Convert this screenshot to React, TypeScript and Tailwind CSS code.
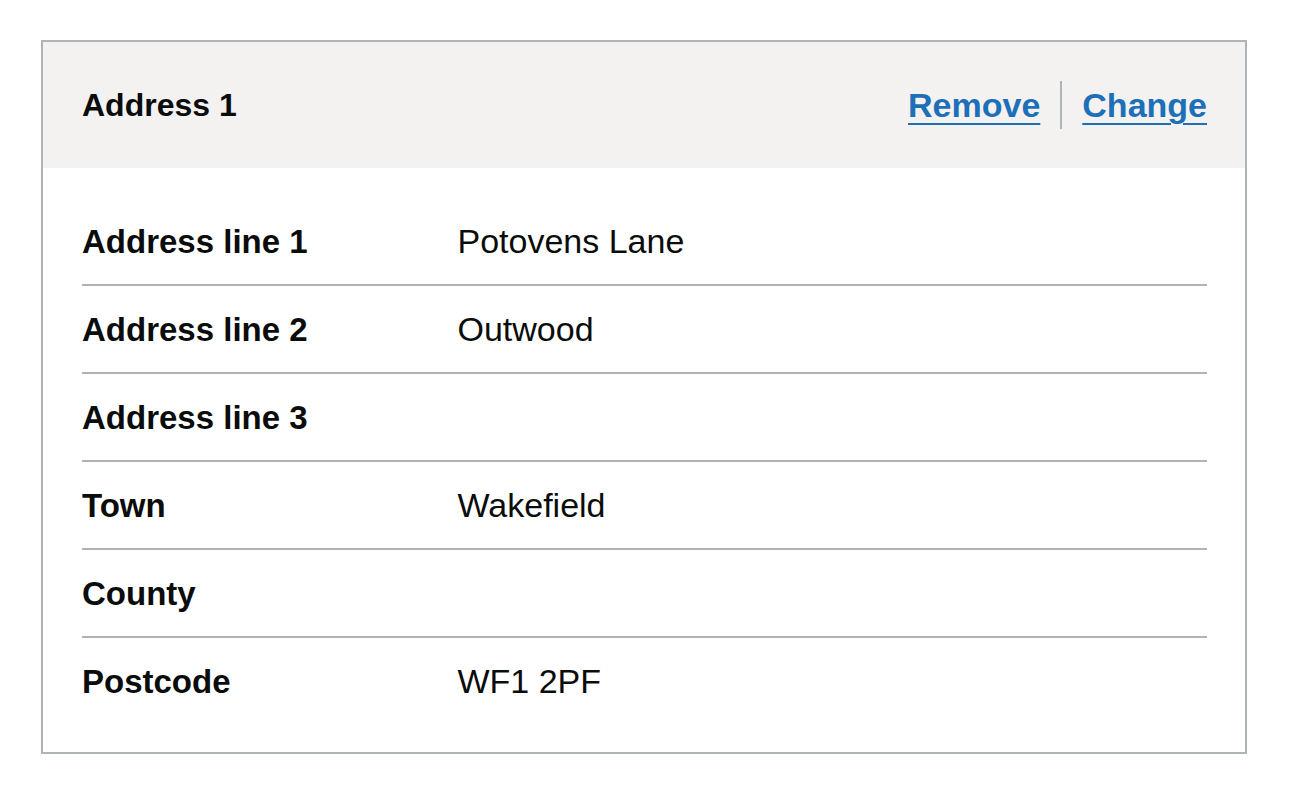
import React from "react";

const rows: { key: string; value: string }[] = [
  { key: "Address line 1", value: "Potovens Lane" },
  { key: "Address line 2", value: "Outwood" },
  { key: "Address line 3", value: "" },
  { key: "Town", value: "Wakefield" },
  { key: "County", value: "" },
  { key: "Postcode", value: "WF1 2PF" },
];

export default function App() {
  return (
    <div
      className="min-h-[800px] bg-white pt-[40px] pl-[41px] text-[#0b0c0c]"
      style={{ fontFamily: '"Liberation Sans", Arial, sans-serif' }}
    >
      <div className="w-[1206px] border-2 border-[#b1b4b6] bg-white">
        <div className="flex h-[126px] items-center justify-between bg-[#f3f2f1] pl-[39px] pr-[38px]">
          <h2 className="text-[32px] font-bold leading-none">Address 1</h2>
          <div className="flex items-center">
            <a
              href="#"
              className="text-[34px] font-bold leading-none text-[#1d70b8] underline decoration-2 underline-offset-[6px]"
            >
              Remove
            </a>
            <span className="mx-[20px] h-[48px] w-[2px] bg-[#b1b4b6]" />
            <a
              href="#"
              className="text-[34px] font-bold leading-none text-[#1d70b8] underline decoration-2 underline-offset-[6px]"
            >
              Change
            </a>
          </div>
        </div>
        <dl className="pl-[39px] pr-[38px] pt-[30px] pb-[28px]">
          {rows.map((r, i) => (
            <div
              key={r.key}
              className={
                "flex items-center " +
                (i < rows.length - 1 ? "h-[88px] border-b-2 border-[#b1b4b6]" : "h-[86px]")
              }
            >
              <dt className="w-[30%] pr-[38px] text-[33px] font-bold leading-none">{r.key}</dt>
              <dd className="flex-1 pl-[38px] text-[34px] leading-none">{r.value}</dd>
            </div>
          ))}
        </dl>
      </div>
    </div>
  );
}
